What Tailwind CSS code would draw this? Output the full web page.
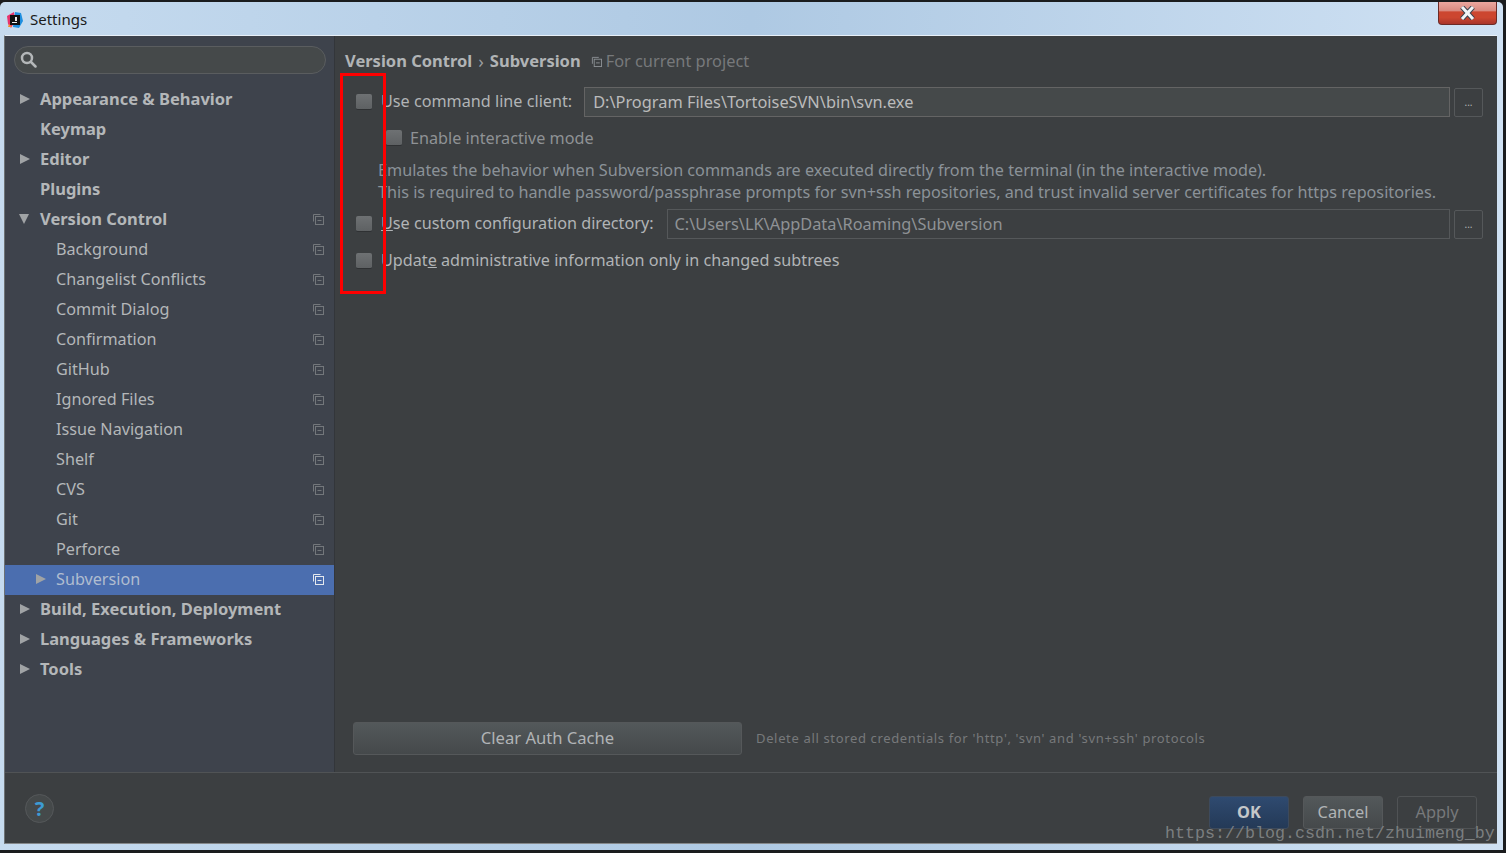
<!DOCTYPE html>
<html lang="en">
  <head>
    <meta charset="UTF-8" />
    <title>Settings</title>
    <script src="https://cdn.jsdelivr.net/npm/@tailwindcss/browser@4"></script>
  </head>
  <body class="bg-[#1a1c1e] overflow-hidden">
    <div class="relative w-[1506px] h-[853px] font-['Noto_Sans',sans-serif] text-[16.2px]">
      <!-- Window frame -->
      <div class="absolute left-0 right-[3px] top-[2px] bottom-[3px] rounded-t-[5px] bg-gradient-to-r from-[#c6dbef] via-[#aec9e3] to-[#cfe1f3] flex flex-col pl-[4px] pr-[6px] pb-[6px]">
        <!-- Title bar -->
        <div class="h-[33px] pt-[2px] shrink-0 flex items-center text-[#1a1a1a] text-[15px]">
          <svg class="w-[16px] h-[16px] ml-[3px] mr-[7px]" viewBox="0 0 16 16">
            <path d="M0 4 L7 0 L8 9 L4 16 L1 12Z" fill="#e8336d" />
            <path d="M8 0 L14 1 L16 9 L12 16 L6 15Z" fill="#1f8fe0" />
            <path d="M2 12 L5 15 L1 15Z" fill="#f58a2c" />
            <rect x="3" y="3" width="10" height="10" fill="#111" />
            <rect x="5" y="10" width="5" height="1" fill="#eee" />
            <rect x="8" y="5" width="2" height="4" fill="#eee" />
          </svg>
          <span>Settings</span>
        </div>

        <div class="flex-1 flex flex-col bg-[#3c3f41] border-t border-[#e8f0f8] border-l border-l-[#6d7275] border-b border-b-[#85888a] min-h-0">
          <div class="flex-1 flex min-h-0">
            <!-- Sidebar -->
            <aside class="w-[330px] shrink-0 bg-[#3e434c] border-r border-[#33363a] text-[#b4b7b9]">
              <div class="ml-[9px] mt-[10px] w-[312px] h-[28px] rounded-[14px] border border-[#5a5d5f] bg-[#45494a] flex items-center pl-[5px]">
                <svg class="w-[17px] h-[17px] -mt-[1px]" viewBox="0 0 17 17" fill="none" stroke="#b4b7b9" stroke-width="2.500">
                  <circle cx="7" cy="7" r="5" />
                  <path d="M11 11 L15.500 15.500" stroke-linecap="round" />
                </svg>
              </div>
              <nav id="tree" class="mt-[11px] [&>div]:pb-[2px]">
                <div class="h-[30px] flex items-center pl-[15px] font-bold text-[16.5px]"><span class="w-0 h-0 border-y-[5.500px] border-y-transparent border-l-[10px] border-l-[#a0a3a5]"></span><span class="ml-[10px]">Appearance &amp; Behavior</span></div>
                <div class="h-[30px] flex items-center pl-[35px] font-bold text-[16.5px]">Keymap</div>
                <div class="h-[30px] flex items-center pl-[15px] font-bold text-[16.5px]"><span class="w-0 h-0 border-y-[5.500px] border-y-transparent border-l-[10px] border-l-[#a0a3a5]"></span><span class="ml-[10px]">Editor</span></div>
                <div class="h-[30px] flex items-center pl-[35px] font-bold text-[16.5px]">Plugins</div>
                <div class="h-[30px] flex items-center pl-[15px] pr-[10px] font-bold text-[16.5px]"><span class="w-0 h-0 border-x-[5.500px] border-x-transparent border-t-[10px] border-t-[#a0a3a5] -ml-[1px]"></span><span class="ml-[11px] flex-1">Version Control</span><svg class="w-[12px] h-[12px]" viewBox="0 0 12 12" fill="none" stroke="#73777b"><path d="M1.500 8.500V1.500H8.500" /><rect x="3.500" y="3.500" width="8" height="8" /><path d="M5.500 7.500H9.500" /></svg></div>
                <div class="h-[30px] flex items-center pl-[51px] pr-[10px]"><span class="flex-1">Background</span><svg class="w-[12px] h-[12px]" viewBox="0 0 12 12" fill="none" stroke="#73777b"><path d="M1.500 8.500V1.500H8.500" /><rect x="3.500" y="3.500" width="8" height="8" /><path d="M5.500 7.500H9.500" /></svg></div>
                <div class="h-[30px] flex items-center pl-[51px] pr-[10px]"><span class="flex-1">Changelist Conflicts</span><svg class="w-[12px] h-[12px]" viewBox="0 0 12 12" fill="none" stroke="#73777b"><path d="M1.500 8.500V1.500H8.500" /><rect x="3.500" y="3.500" width="8" height="8" /><path d="M5.500 7.500H9.500" /></svg></div>
                <div class="h-[30px] flex items-center pl-[51px] pr-[10px]"><span class="flex-1">Commit Dialog</span><svg class="w-[12px] h-[12px]" viewBox="0 0 12 12" fill="none" stroke="#73777b"><path d="M1.500 8.500V1.500H8.500" /><rect x="3.500" y="3.500" width="8" height="8" /><path d="M5.500 7.500H9.500" /></svg></div>
                <div class="h-[30px] flex items-center pl-[51px] pr-[10px]"><span class="flex-1">Confirmation</span><svg class="w-[12px] h-[12px]" viewBox="0 0 12 12" fill="none" stroke="#73777b"><path d="M1.500 8.500V1.500H8.500" /><rect x="3.500" y="3.500" width="8" height="8" /><path d="M5.500 7.500H9.500" /></svg></div>
                <div class="h-[30px] flex items-center pl-[51px] pr-[10px]"><span class="flex-1">GitHub</span><svg class="w-[12px] h-[12px]" viewBox="0 0 12 12" fill="none" stroke="#73777b"><path d="M1.500 8.500V1.500H8.500" /><rect x="3.500" y="3.500" width="8" height="8" /><path d="M5.500 7.500H9.500" /></svg></div>
                <div class="h-[30px] flex items-center pl-[51px] pr-[10px]"><span class="flex-1">Ignored Files</span><svg class="w-[12px] h-[12px]" viewBox="0 0 12 12" fill="none" stroke="#73777b"><path d="M1.500 8.500V1.500H8.500" /><rect x="3.500" y="3.500" width="8" height="8" /><path d="M5.500 7.500H9.500" /></svg></div>
                <div class="h-[30px] flex items-center pl-[51px] pr-[10px]"><span class="flex-1">Issue Navigation</span><svg class="w-[12px] h-[12px]" viewBox="0 0 12 12" fill="none" stroke="#73777b"><path d="M1.500 8.500V1.500H8.500" /><rect x="3.500" y="3.500" width="8" height="8" /><path d="M5.500 7.500H9.500" /></svg></div>
                <div class="h-[30px] flex items-center pl-[51px] pr-[10px]"><span class="flex-1">Shelf</span><svg class="w-[12px] h-[12px]" viewBox="0 0 12 12" fill="none" stroke="#73777b"><path d="M1.500 8.500V1.500H8.500" /><rect x="3.500" y="3.500" width="8" height="8" /><path d="M5.500 7.500H9.500" /></svg></div>
                <div class="h-[30px] flex items-center pl-[51px] pr-[10px]"><span class="flex-1">CVS</span><svg class="w-[12px] h-[12px]" viewBox="0 0 12 12" fill="none" stroke="#73777b"><path d="M1.500 8.500V1.500H8.500" /><rect x="3.500" y="3.500" width="8" height="8" /><path d="M5.500 7.500H9.500" /></svg></div>
                <div class="h-[30px] flex items-center pl-[51px] pr-[10px]"><span class="flex-1">Git</span><svg class="w-[12px] h-[12px]" viewBox="0 0 12 12" fill="none" stroke="#73777b"><path d="M1.500 8.500V1.500H8.500" /><rect x="3.500" y="3.500" width="8" height="8" /><path d="M5.500 7.500H9.500" /></svg></div>
                <div class="h-[30px] flex items-center pl-[51px] pr-[10px]"><span class="flex-1">Perforce</span><svg class="w-[12px] h-[12px]" viewBox="0 0 12 12" fill="none" stroke="#73777b"><path d="M1.500 8.500V1.500H8.500" /><rect x="3.500" y="3.500" width="8" height="8" /><path d="M5.500 7.500H9.500" /></svg></div>
                <div class="h-[30px] flex items-center pl-[31px] pr-[10px] bg-[#4b6eaf]"><span class="w-0 h-0 border-y-[5.500px] border-y-transparent border-l-[10px] border-l-[#a0a3a5]"></span><span class="ml-[10px] flex-1 text-[#b0bdd0]">Subversion</span><svg class="w-[12px] h-[12px]" viewBox="0 0 12 12" fill="none" stroke="#e4e8ee"><path d="M1.500 8.500V1.500H8.500" /><rect x="3.500" y="3.500" width="8" height="8" /><path d="M5.500 7.500H9.500" /></svg></div>
                <div class="h-[30px] flex items-center pl-[15px] font-bold text-[16.5px]"><span class="w-0 h-0 border-y-[5.500px] border-y-transparent border-l-[10px] border-l-[#a0a3a5]"></span><span class="ml-[10px]">Build, Execution, Deployment</span></div>
                <div class="h-[30px] flex items-center pl-[15px] font-bold text-[16.5px]"><span class="w-0 h-0 border-y-[5.500px] border-y-transparent border-l-[10px] border-l-[#a0a3a5]"></span><span class="ml-[10px]">Languages &amp; Frameworks</span></div>
                <div class="h-[30px] flex items-center pl-[15px] font-bold text-[16.5px]"><span class="w-0 h-0 border-y-[5.500px] border-y-transparent border-l-[10px] border-l-[#a0a3a5]"></span><span class="ml-[10px]">Tools</span></div>
              </nav>
            </aside>

            <!-- Content -->
            <main class="flex-1 min-w-0 flex flex-col text-[#b1b4b6] pl-[10px] pr-[14px]">
              <div class="h-[24px] mt-[13px] flex items-center">
                <span class="font-bold text-[16.5px]">Version Control</span>
                <span class="mx-[6px] text-[#9a9da0] text-[18px] leading-none">›</span>
                <span class="font-bold text-[16.5px]">Subversion</span>
                <svg class="w-[11px] h-[11px] ml-[10px] mr-[4px]" viewBox="0 0 12 12" fill="#3c3f41" stroke="#8c9095"><path d="M1.500 8.500V1.500H8.500" /><rect x="3.500" y="3.500" width="8" height="8" /><path d="M5.500 7.500H9.500" /></svg>
                <span class="text-[#77797b] text-[16.35px]">For current project</span>
              </div>

              <div class="mt-[14px] flex items-center h-[30px]">
                <span class="w-[16px] h-[16px] ml-[11px] rounded-[2px] bg-gradient-to-b from-[#6e7173] to-[#5e6163] border-b border-[#2f3133]"></span>
                <span class="ml-[9px] -mt-[2px]">Use command line client:</span>
                <div class="ml-[12px] flex-1 h-[30px] bg-[#45494a] border border-[#646464] flex items-center pl-[8px] text-[#bbbbbb] text-[16.35px]">D:\Program Files\TortoiseSVN\bin\svn.exe</div>
                <button class="ml-[4px] w-[29px] h-[29px] rounded-[2px] border border-[#55585a] text-[#b1b4b6] text-[10px] leading-none">...</button>
              </div>
              <div class="mt-[6px] flex items-center h-[30px]">
                <span class="w-[16px] h-[16px] ml-[41px] rounded-[2px] bg-gradient-to-b from-[#6e7173] to-[#5e6163] border-b border-[#2f3133]"></span>
                <span class="ml-[8px] text-[#8f9295]">Enable interactive mode</span>
              </div>
              <div class="mt-[6px] ml-[33px] leading-[22px] text-[#8b9298]">
                <p>Emulates the behavior when Subversion commands are executed directly from the terminal (in the interactive mode).</p>
                <p>This is required to handle password/passphrase prompts for svn+ssh repositories, and trust invalid server certificates for https repositories.</p>
              </div>
              <div class="mt-[6px] flex items-center h-[30px]">
                <span class="w-[16px] h-[16px] ml-[11px] rounded-[2px] bg-gradient-to-b from-[#6e7173] to-[#5e6163] border-b border-[#2f3133]"></span>
                <span class="ml-[9px] -mt-[2px]"><span class="underline">U</span>se custom configuration directory:</span>
                <div class="ml-[13px] flex-1 h-[30px] border border-[#55585a] flex items-center pl-[7px] text-[#8f9295] text-[16.35px]">C:\Users\LK\AppData\Roaming\Subversion</div>
                <button class="ml-[4px] w-[29px] h-[29px] rounded-[2px] border border-[#55585a] text-[#b1b4b6] text-[10px] leading-none">...</button>
              </div>
              <div class="mt-[7px] flex items-center h-[30px]">
                <span class="w-[16px] h-[16px] ml-[11px] rounded-[2px] bg-gradient-to-b from-[#6e7173] to-[#5e6163] border-b border-[#2f3133]"></span>
                <span class="ml-[9px] -mt-[2px]">Updat<span class="underline">e</span> administrative information only in changed subtrees</span>
              </div>

              <div class="mt-auto mb-[17px] flex items-center">
                <button class="ml-[8px] w-[389px] h-[33px] pb-[1px] rounded-[3px] border border-[#55585a] bg-gradient-to-b from-[#53585a] to-[#45494b] text-[#b1b4b6] text-[16.6px]">Clear Auth Cache</button>
                <span class="ml-[14px] text-[13px] tracking-[0.65px] text-[#77797b]">Delete all stored credentials for 'http', 'svn' and 'svn+ssh' protocols</span>
              </div>
            </main>
          </div>

          <!-- Footer -->
          <footer class="h-[71px] shrink-0 border-t border-[#505355] flex items-start pl-[20px] pr-[20px] text-[16.35px]">
            <div class="mt-[21px] w-[29px] h-[29px] rounded-full border border-[#55585a] bg-[#45494a] flex items-center justify-center text-[#3d9bd3] text-[20px] font-bold leading-none">?</div>
            <button class="ml-auto mt-[23px] w-[80px] h-[33px] pb-[1px] rounded-[3px] border border-[#3d4a5c] bg-gradient-to-b from-[#2f4a70] to-[#243a57] text-[#c4c7c9] font-bold">OK</button>
            <button class="ml-[14px] mt-[23px] w-[80px] h-[33px] pb-[1px] rounded-[3px] border border-[#55585a] bg-gradient-to-b from-[#53585a] to-[#45494b] text-[#b1b4b6]">Cancel</button>
            <button class="ml-[14px] mt-[23px] w-[80px] h-[33px] pb-[1px] rounded-[3px] border border-[#505355] text-[#77797b]">Apply</button>
          </footer>
        </div>
      </div>

      <!-- Close button -->
      <div class="absolute left-[1438px] top-[2px] w-[59px] h-[23px] rounded-b-[4px] border border-[#6b2a26] border-t-0 bg-[linear-gradient(#eba79f_0%,#d98a80_40%,#cc4630_45%,#cc4630_70%,#a9352a_100%)] flex items-center justify-center">
        <svg class="w-[15px] h-[14px]" viewBox="0 0 15 14"><path d="M2 1 L13 13 M13 1 L2 13" stroke="#3c4450" stroke-width="5" /><path d="M2 1 L13 13 M13 1 L2 13" stroke="#f2f4f6" stroke-width="3" /></svg>
      </div>

      <!-- Annotation -->
      <div class="absolute left-[340px] top-[73px] w-[46px] h-[221px] border-[3px] border-[#ff0000]"></div>

      <!-- Watermark -->
      <div class="absolute left-[1165px] top-[823px] font-['Liberation_Mono',monospace] text-[16.67px] leading-[22px] text-[#8d9091]/80 whitespace-nowrap">https://blog.csdn.net/zhuimeng_by</div>
    </div>
  </body>
</html>
